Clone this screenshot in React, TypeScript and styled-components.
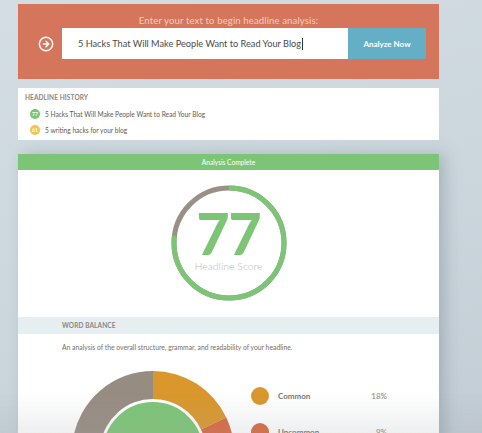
import React from "react";
import styled, { createGlobalStyle } from "styled-components";
import { CircleArrowRight } from "lucide-react";

const GlobalStyle = createGlobalStyle`
  html, body {
    margin: 0;
    padding: 0;
    height: 100%;
    overflow: hidden;
  }
  body {
    background: linear-gradient(160deg, #d3dde3 0%, #cbd5dc 60%, #c3cdd5 100%);
    font-family: Lato, "Open Sans", "Liberation Sans", sans-serif;
  }
`;

const Page = styled.div`
  width: 421px;
  padding: 4px 0 0 18px;
  display: flex;
  flex-direction: column;
`;

const InputPanel = styled.div`
  background: #d5755b;
  height: 75px;
  box-sizing: border-box;
  padding-top: 10px;
  display: flex;
  flex-direction: column;
  align-items: center;
`;

const PanelTitle = styled.div`
  color: #f4cfc2;
  font-size: 9.6px;
  letter-spacing: 0.1px;
  line-height: 13px;
`;

const InputRow = styled.div`
  display: flex;
  align-items: center;
  align-self: stretch;
  margin-top: 1px;
  padding-left: 20px;
`;

const GoIcon = styled.span`
  width: 24px;
  display: flex;
  color: #fff;
`;

const HeadlineInput = styled.div`
  width: 286px;
  height: 31px;
  box-sizing: border-box;
  background: #fff;
  padding-left: 16px;
  display: flex;
  align-items: center;
  font-size: 9.2px;
  color: #4a4a4a;
  white-space: nowrap;
`;

const Caret = styled.span`
  display: inline-block;
  width: 1px;
  height: 12px;
  background: #333;
  margin-left: 1px;
`;

const AnalyzeButton = styled.button`
  width: 78px;
  height: 31px;
  border: 0;
  background: #64aec6;
  color: #fff;
  font-family: inherit;
  font-size: 8px;
  font-weight: 700;
  padding: 0;
`;

const HistoryPanel = styled.div`
  margin-top: 9px;
  background: #fff;
  height: 52px;
  box-sizing: border-box;
  padding: 5px 0 0 7px;
`;

const SmallCaps = styled.div`
  font-size: 6.5px;
  font-weight: 700;
  color: #8d8680;
  letter-spacing: 0.1px;
  line-height: 10px;
`;

const HistoryList = styled.div`
  display: flex;
  flex-direction: column;
  gap: 5px;
  margin-top: 5px;
  padding-left: 5px;
`;

const HistoryItem = styled.div`
  display: flex;
  align-items: center;
  gap: 5px;
  font-size: 6.6px;
  color: #5a5a5a;
  height: 11px;
`;

const Badge = styled.span<{ $color: string }>`
  width: 10px;
  height: 10px;
  border-radius: 50%;
  background: ${(p) => p.$color};
  color: #fff;
  font-size: 5px;
  font-weight: 700;
  display: flex;
  align-items: center;
  justify-content: center;
`;

const ResultCard = styled.div`
  margin-top: 14px;
  background: #fff;
  box-shadow: 6px 0 14px rgba(90, 105, 120, 0.3);
  height: 300px;
`;

const CompleteBar = styled.div`
  background: #7cc576;
  height: 16px;
  color: #fff;
  font-size: 6.6px;
  display: flex;
  align-items: center;
  justify-content: center;
`;

const ScoreSection = styled.div`
  height: 147px;
  display: flex;
  justify-content: center;
  padding-top: 15px;
  box-sizing: border-box;
`;

const ScoreDial = styled.div`
  position: relative;
  width: 116px;
  height: 116px;
`;

const ScoreText = styled.div`
  position: absolute;
  inset: 0;
  display: flex;
  flex-direction: column;
  align-items: center;
`;

const ScoreNumber = styled.div`
  margin-top: 25px;
  height: 46px;
  font-size: 57px;
  font-weight: 900;
  color: #7cc576;
  line-height: 46px;
  letter-spacing: -1px;
`;

const ScoreLabel = styled.div`
  margin-top: 4px;
  font-size: 10.5px;
  font-weight: 300;
  color: #bdb8b3;
  line-height: 13px;
`;

const SectionHeader = styled.div`
  background: #e7eef2;
  height: 17px;
  display: flex;
  align-items: center;
  padding-left: 44px;
`;

const Description = styled.div`
  padding: 8px 0 0 44px;
  font-size: 6.8px;
  color: #7a6e66;
  line-height: 10px;
`;

const ChartRow = styled.div`
  display: flex;
  padding: 19px 0 0 54px;
  gap: 17px;
`;

const Legend = styled.div`
  display: flex;
  flex-direction: column;
  gap: 18px;
  padding-top: 16px;
`;

const LegendRow = styled.div`
  display: flex;
  align-items: center;
  width: 136px;
`;

const Dot = styled.span<{ $color: string }>`
  width: 18px;
  height: 18px;
  border-radius: 50%;
  background: ${(p) => p.$color};
`;

const LegendName = styled.span`
  margin-left: 9px;
  flex: 1;
  font-size: 8px;
  font-weight: 700;
  color: #7a7572;
`;

const LegendValue = styled.span`
  font-size: 8px;
  color: #8a8582;
`;

const BottomFade = styled.div`
  position: fixed;
  left: 0;
  right: 0;
  bottom: 0;
  height: 40px;
  background: linear-gradient(to bottom, rgba(200, 200, 200, 0), rgba(160, 165, 170, 0.18));
  pointer-events: none;
`;

const history = [
  { score: 77, color: "#7cc576", text: "5 Hacks That Will Make People Want to Read Your Blog" },
  { score: 61, color: "#f2c54e", text: "5 writing hacks for your blog" },
];

const segments = [
  { label: "Common", value: 18, color: "#d9972c" },
  { label: "Uncommon", value: 9, color: "#d8683f" },
  { label: "Emotional", value: 5, color: "#9b8fc0" },
  { label: "Other", value: 68, color: "#978c82" },
];

function polar(cx: number, cy: number, r: number, deg: number) {
  const a = ((deg - 90) * Math.PI) / 180;
  return [cx + r * Math.cos(a), cy + r * Math.sin(a)];
}

function ringPath(cx: number, cy: number, ro: number, ri: number, a0: number, a1: number) {
  const large = a1 - a0 > 180 ? 1 : 0;
  const [x0, y0] = polar(cx, cy, ro, a0);
  const [x1, y1] = polar(cx, cy, ro, a1);
  const [x2, y2] = polar(cx, cy, ri, a1);
  const [x3, y3] = polar(cx, cy, ri, a0);
  return `M${x0} ${y0} A${ro} ${ro} 0 ${large} 1 ${x1} ${y1} L${x2} ${y2} A${ri} ${ri} 0 ${large} 0 ${x3} ${y3} Z`;
}

const ScoreRing: React.FC<{ score: number }> = ({ score }) => {
  const r = 55;
  const c = 2 * Math.PI * r;
  const green = (score / 100) * c;
  return (
    <svg width="116" height="116" viewBox="0 0 116 116">
      <circle cx="58" cy="58" r={r} fill="none" stroke="#9a9088" strokeWidth="5" />
      <circle
        cx="58"
        cy="58"
        r={r}
        fill="none"
        stroke="#7cc576"
        strokeWidth="5"
        strokeDasharray={`${green} ${c}`}
        transform="rotate(-90 58 58)"
      />
    </svg>
  );
};

const Donut: React.FC = () => {
  let start = 0;
  return (
    <svg width="162" height="162" viewBox="0 0 162 162">
      {segments.map((s) => {
        const a0 = start;
        const a1 = start + (s.value / 100) * 360;
        start = a1;
        return <path key={s.label} d={ringPath(81, 81, 81, 53, a0, a1)} fill={s.color} />;
      })}
      <circle cx="81" cy="81" r="51" fill="#7cc576" stroke="#fff" strokeWidth="2" />
      <text
        x="81"
        y="98"
        textAnchor="middle"
        fill="#fff"
        fontSize="48"
        fontWeight="700"
        fontFamily="Lato, 'Liberation Sans', sans-serif"
      >
        A+
      </text>
    </svg>
  );
};

export default function App() {
  return (
    <>
      <GlobalStyle />
      <Page>
        <InputPanel>
          <PanelTitle>Enter your text to begin headline analysis:</PanelTitle>
          <InputRow>
            <GoIcon>
              <CircleArrowRight size={16} strokeWidth={2.2} />
            </GoIcon>
            <HeadlineInput>
              5 Hacks That Will Make People Want to Read Your Blog
              <Caret />
            </HeadlineInput>
            <AnalyzeButton>Analyze Now</AnalyzeButton>
          </InputRow>
        </InputPanel>

        <HistoryPanel>
          <SmallCaps>HEADLINE HISTORY</SmallCaps>
          <HistoryList>
            {history.map((h) => (
              <HistoryItem key={h.text}>
                <Badge $color={h.color}>{h.score}</Badge>
                {h.text}
              </HistoryItem>
            ))}
          </HistoryList>
        </HistoryPanel>

        <ResultCard>
          <CompleteBar>Analysis Complete</CompleteBar>
          <ScoreSection>
            <ScoreDial>
              <ScoreRing score={77} />
              <ScoreText>
                <ScoreNumber>77</ScoreNumber>
                <ScoreLabel>Headline Score</ScoreLabel>
              </ScoreText>
            </ScoreDial>
          </ScoreSection>
          <SectionHeader>
            <SmallCaps>WORD BALANCE</SmallCaps>
          </SectionHeader>
          <Description>
            An analysis of the overall structure, grammar, and readability of your headline.
          </Description>
          <ChartRow>
            <Donut />
            <Legend>
              {segments.slice(0, 2).map((s) => (
                <LegendRow key={s.label}>
                  <Dot $color={s.color} />
                  <LegendName>{s.label}</LegendName>
                  <LegendValue>{s.value}%</LegendValue>
                </LegendRow>
              ))}
            </Legend>
          </ChartRow>
        </ResultCard>
      </Page>
      <BottomFade />
    </>
  );
}
